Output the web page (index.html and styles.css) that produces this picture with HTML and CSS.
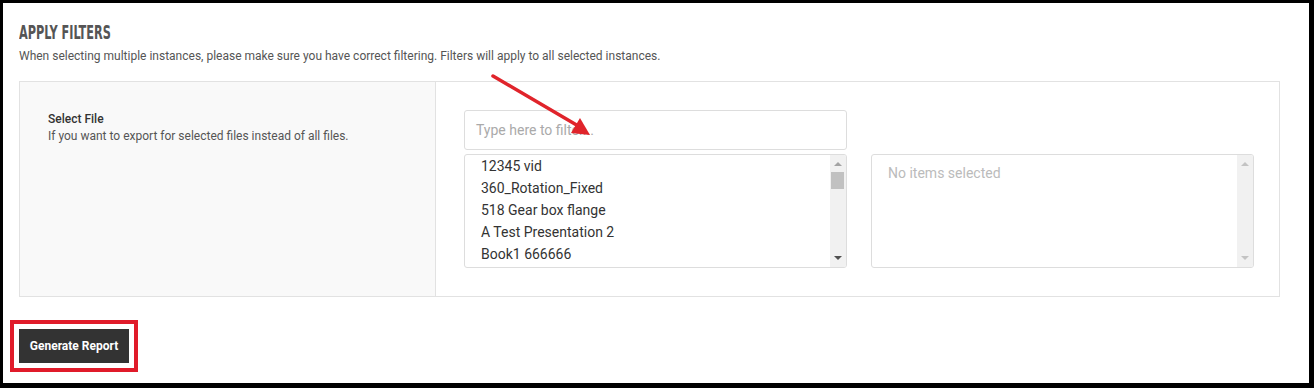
FILE: index.html
```html
<!DOCTYPE html>
<html lang="en">
<head>
  <meta charset="UTF-8">
  <title>Apply Filters</title>
  <link rel="stylesheet" href="styles.css">
</head>
<body>
  <div class="frame">
    <h2 class="title"><span>APPLY FILTERS</span></h2>
    <p class="intro">When selecting multiple instances, please make sure you have correct filtering. Filters will apply to all selected instances.</p>

    <div class="filter-panel">
      <div class="panel-left">
        <div class="field-name">Select File</div>
        <div class="field-help">If you want to export for selected files instead of all files.</div>
      </div>

      <div class="panel-right">
        <div class="filter-row">
          <div class="filter-input">Type here to filter...</div>
        </div>
        <div class="lists">
          <div class="list-box">
            <ul class="items">
              <li>12345 vid</li>
              <li>360_Rotation_Fixed</li>
              <li>518 Gear box flange</li>
              <li>A Test Presentation 2</li>
              <li>Book1 666666</li>
            </ul>
            <div class="scrollbar">
              <span class="arrow-up"></span>
              <span class="thumb"></span>
              <span class="arrow-down"></span>
            </div>
          </div>
          <div class="list-box">
            <div class="empty">No items selected</div>
            <div class="scrollbar off">
              <span class="arrow-up"></span>
              <span class="arrow-down"></span>
            </div>
          </div>
        </div>
      </div>
    </div>

    <div class="btn-wrap">
      <button type="button" class="report-btn">Generate Report</button>
    </div>

    <svg class="pointer" width="130" height="80" viewBox="0 0 130 80">
      <line x1="5" y1="6" x2="92" y2="57" stroke="#e0242b" stroke-width="3.5" stroke-linecap="round"/>
      <polygon points="102,65 83,63 92,48" fill="#e0242b"/>
    </svg>
  </div>
</body>
</html>
```

FILE: styles.css
```css
* {
  margin: 0;
  padding: 0;
  box-sizing: border-box;
}

body, html {
  background-color: #000;
  font-family: Roboto, 'Liberation Sans', sans-serif;
}

.frame {
  position: relative;
  margin: 3px 5px 0 3px;
  height: 380px;
  background: #fff;
  padding: 19px 29px 0 16px;
}

.title {
  height: 20px;
  font-family: 'DejaVu Sans Condensed', 'DejaVu Sans', sans-serif;
  font-size: 19px;
  font-weight: bold;
  color: #555;
  line-height: 20px;
}

.title span {
  display: inline-block;
  transform: scaleX(0.66);
  transform-origin: left center;
}

.intro {
  margin-top: 6px;
  font-size: 12px;
  color: #555;
  line-height: 16px;
}

.filter-panel {
  display: flex;
  margin-top: 17px;
  border: 1px solid #e2e2e2;
  height: 216px;
}

.panel-left {
  width: 416px;
  background: #f9f9f9;
  border-right: 1px solid #e2e2e2;
  padding: 29px 28px;
}

.field-name {
  font-size: 12px;
  font-weight: 500;
  color: #333;
  line-height: 17px;
}

.field-help {
  font-size: 12px;
  color: #555;
  line-height: 17px;
}

.panel-right {
  flex: 1;
  padding: 28px 24px 28px 28px;
}

.filter-row {
  width: 383px;
}

.filter-input {
  height: 40px;
  border: 1px solid #ddd;
  border-radius: 3px;
  padding: 0 11px;
  font-size: 14px;
  line-height: 38px;
  color: #aaa;
}

.lists {
  display: flex;
  gap: 24px;
  margin-top: 4px;
}

.list-box {
  display: flex;
  width: 383px;
  height: 114px;
  border: 1px solid #ddd;
  border-radius: 3px;
  overflow: hidden;
}

.items {
  flex: 1;
  list-style: none;
  padding: 0 16px;
  font-size: 14px;
  line-height: 22px;
  color: #333;
}

.empty {
  flex: 1;
  padding: 7px 16px;
  font-size: 14px;
  line-height: 22px;
  color: #bbb;
}

.scrollbar {
  position: relative;
  width: 16px;
  background: #f1f1f1;
}

.arrow-up, .arrow-down {
  position: absolute;
  left: 4px;
  width: 0;
  height: 0;
  border-left: 4px solid transparent;
  border-right: 4px solid transparent;
}

.arrow-up {
  top: 7px;
  border-bottom: 4px solid #a3a3a3;
}

.arrow-down {
  bottom: 7px;
  border-top: 4px solid #505050;
}

.off .arrow-up {
  border-bottom-color: #c3c3c3;
}

.off .arrow-down {
  border-top-color: #c3c3c3;
}

.thumb {
  position: absolute;
  top: 17px;
  left: 1px;
  width: 13px;
  height: 17px;
  background: #c1c1c1;
}

.btn-wrap {
  display: inline-block;
  margin-top: 23px;
  margin-left: -9px;
  padding: 5px;
  border: 4px solid #e01b2a;
}

.report-btn {
  display: block;
  width: 110px;
  height: 34px;
  border: none;
  background: #333;
  color: #fff;
  font-family: Roboto, 'Liberation Sans', sans-serif;
  font-size: 12px;
  font-weight: bold;
}

.pointer {
  position: absolute;
  left: 485px;
  top: 67px;
}
```
